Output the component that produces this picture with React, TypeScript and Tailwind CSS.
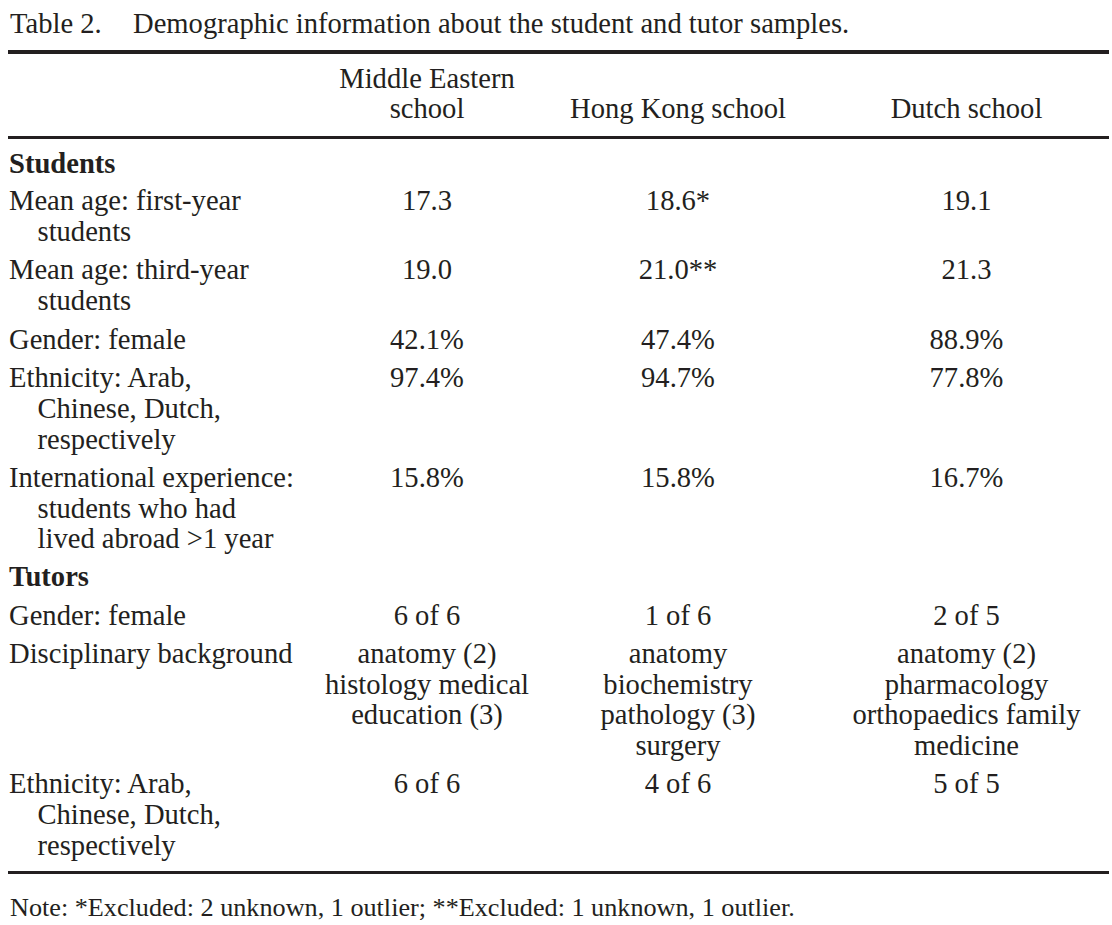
import React from "react";

type Row = {
  label: string[];
  cells: string[][];
  bold?: boolean;
  mt: string;
};

const rows: Row[] = [
  { label: ["Students"], cells: [[], [], []], bold: true, mt: "mt-[10.3px]" },
  { label: ["Mean age: first-year", "students"], cells: [["17.3"], ["18.6*"], ["19.1"]], mt: "mt-[6px]" },
  { label: ["Mean age: third-year", "students"], cells: [["19.0"], ["21.0**"], ["21.3"]], mt: "mt-[8px]" },
  { label: ["Gender: female"], cells: [["42.1%"], ["47.4%"], ["88.9%"]], mt: "mt-[8px]" },
  { label: ["Ethnicity: Arab,", "Chinese, Dutch,", "respectively"], cells: [["97.4%"], ["94.7%"], ["77.8%"]], mt: "mt-[7.7px]" },
  {
    label: ["International experience:", "students who had", "lived abroad >1 year"],
    cells: [["15.8%"], ["15.8%"], ["16.7%"]],
    mt: "mt-[7.7px]",
  },
  { label: ["Tutors"], cells: [[], [], []], bold: true, mt: "mt-[7.4px]" },
  { label: ["Gender: female"], cells: [["6 of 6"], ["1 of 6"], ["2 of 5"]], mt: "mt-[7.4px]" },
  {
    label: ["Disciplinary background"],
    cells: [
      ["anatomy (2)", "histology medical", "education (3)"],
      ["anatomy", "biochemistry", "pathology (3)", "surgery"],
      ["anatomy (2)", "pharmacology", "orthopaedics family", "medicine"],
    ],
    mt: "mt-[7.7px]",
  },
  { label: ["Ethnicity: Arab,", "Chinese, Dutch,", "respectively"], cells: [["6 of 6"], ["4 of 6"], ["5 of 5"]], mt: "mt-[7.4px]" },
];

function Lines({ lines }: { lines: string[] }) {
  return (
    <>
      {lines.map((l, i) => (
        <div key={i} className="whitespace-pre">
          {l}
        </div>
      ))}
    </>
  );
}

export default function App() {
  return (
    <div className="w-[1112px] h-[925px] bg-white pl-[8px] pr-[3px] pt-[9px] font-['Liberation_Serif'] text-[28.6px] leading-[30.7px] text-[#231f20] overflow-hidden">
      <div className="flex pl-[2px] whitespace-nowrap">
        <span className="w-[123px] shrink-0">Table 2.</span>
        <span>Demographic information about the student and tutor samples.</span>
      </div>

      <div className="mt-[10.3px] h-[3.5px] bg-[#231f20]" />

      <div className="mt-[10px] grid grid-cols-[301px_236px_266px_1fr] items-end">
        <div />
        <div className="text-center">
          <Lines lines={["Middle Eastern", "school"]} />
        </div>
        <div className="text-center">Hong Kong school</div>
        <div className="text-center pl-[13px]">Dutch school</div>
      </div>

      <div className="mt-[11.5px] h-[2.5px] bg-[#231f20]" />

      <div className="flex flex-col">
        {rows.map((r, i) => (
          <div key={i} className={`grid grid-cols-[301px_236px_266px_1fr] items-start ${r.mt}`}>
            <div className={`pl-[1px] ${r.bold ? "font-bold" : ""}`}>
              {r.label.map((l, j) => (
                <div key={j} className={j > 0 ? "pl-[28.5px] whitespace-pre" : "whitespace-pre"}>
                  {l}
                </div>
              ))}
            </div>
            <div className="text-center">
              <Lines lines={r.cells[0]} />
            </div>
            <div className="text-center">
              <Lines lines={r.cells[1]} />
            </div>
            <div className="text-center pl-[13px]">
              <Lines lines={r.cells[2]} />
            </div>
          </div>
        ))}
      </div>

      <div className="mt-[9.5px] h-[3.5px] bg-[#231f20]" />

      <div className="mt-[19px] pl-[2px] whitespace-nowrap text-[26.2px]">
        Note: *Excluded: 2 unknown, 1 outlier; **Excluded: 1 unknown, 1 outlier.
      </div>
    </div>
  );
}
